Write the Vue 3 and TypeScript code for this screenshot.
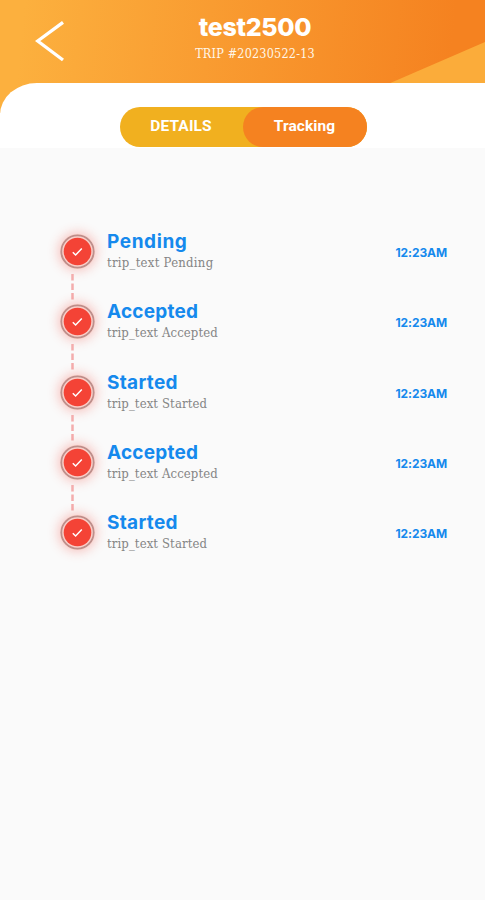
<script setup lang="ts">
interface TripEvent {
  title: string
  detail: string
  time: string
  kind: string
}

const events: TripEvent[] = ['Pending', 'Accepted', 'Started', 'Accepted', 'Started'].map((status) => ({
  title: status,
  detail: `trip_text ${status}`,
  time: '12:23AM',
  kind: status.toLowerCase(),
}))
</script>

<template>
  <main class="screen">
    <header class="hero">
      <svg class="accent" viewBox="0 0 97 42" aria-hidden="true">
        <path d="M0 42 97 0V42Z" />
      </svg>
      <button class="back" aria-label="Back">
        <svg viewBox="0 0 30 42" aria-hidden="true"><path d="M28 2.4 2.7 21 28 40" /></svg>
      </button>
      <div class="heading">
        <h1>test2500</h1>
        <p>TRIP #20230522-13</p>
      </div>
    </header>

    <section class="sheet">
      <nav class="tabs">
        <button class="tab details"><span>DETAILS</span></button>
        <button class="tab tracking"><span>Tracking</span></button>
      </nav>
    </section>

    <ol class="timeline">
      <li v-for="(event, index) in events" :key="index" class="event">
        <div class="marker">
          <svg class="dot" viewBox="0 0 35 35" aria-hidden="true">
            <circle class="ring" cx="17.5" cy="17.5" r="16.2" />
            <circle class="disc" cx="17.5" cy="17.5" r="13.8" />
            <path class="check" d="M12.8 18.2 15.6 21 21.8 14.6" />
          </svg>
          <svg v-if="index < events.length - 1" class="link" viewBox="0 0 3 26" aria-hidden="true">
            <path d="M1.5 0V26" />
          </svg>
        </div>
        <div class="copy">
          <h2 :class="event.kind">{{ event.title }}</h2>
          <p :class="event.kind">{{ event.detail }}</p>
        </div>
        <time>{{ event.time }}</time>
      </li>
    </ol>
  </main>
</template>

<style>
body {
  background: #fafafa;
}
</style>

<style scoped>
* {
  box-sizing: border-box;
}
h1, h2, p, ol {
  margin: 0;
  padding: 0;
}
button {
  border: 0;
  padding: 0;
  background: none;
}
svg {
  display: block;
  fill: none;
}
.screen {
  width: 100%;
  height: 900px;
  overflow: hidden;
  background: #fafafa;
  font-family: Inter, "Open Sans", sans-serif;
}
.hero {
  position: relative;
  height: 113px;
  background: linear-gradient(96deg, #fcb03e 5%, #f58220 92%);
}
.accent {
  position: absolute;
  right: 0;
  top: 42px;
  width: 97px;
  height: 42px;
}
.accent path {
  fill: #fbac3a;
}
.back {
  position: absolute;
  left: 35px;
  top: 20px;
  width: 30px;
  height: 42px;
}
.back path {
  stroke: #fff;
  stroke-width: 3.3;
}
.heading {
  padding: 12px 0 0 25px;
  text-align: center;
  color: #fff;
  white-space: nowrap;
}
h1 {
  font-size: 25px;
  line-height: 30px;
  font-weight: 800;
  letter-spacing: -0.3px;
}
.heading p {
  font-family: "DejaVu Serif Condensed", "DejaVu Serif", serif;
  font-stretch: condensed;
  font-size: 12.5px;
  line-height: 16px;
  margin-top: 4px;
  letter-spacing: 0.2px;
  color: #fff6e8;
}
.sheet {
  position: relative;
  height: 65px;
  margin-top: -30px;
  padding-top: 24px;
  border-radius: 37px 0 0 0 / 32px 0 0 0;
  background: #fff;
}
.tabs {
  display: flex;
  width: 247px;
  height: 40px;
  margin-left: 120px;
  border-radius: 20px;
  background: #f1b01f;
}
.tab {
  height: 40px;
  width: 123px;
  padding-bottom: 2px;
  font: 700 15.5px/38px Roboto, sans-serif;
  letter-spacing: 0.1px;
  color: #fff;
  white-space: nowrap;
}
.details {
  padding-right: 1px;
}
.tracking {
  width: 124px;
  padding-right: 1px;
  border-radius: 20px;
  background: #f58220;
}
.timeline {
  list-style: none;
  padding: 81px 38px 0 59px;
}
.event {
  display: flex;
  height: 70.3px;
}
.marker {
  width: 48px;
}
.dot {
  width: 35px;
  height: 35px;
  margin: 5px 0 0 0.5px;
  border-radius: 50%;
  background: #f9cfc9;
  box-shadow: 0 0 11px 2px #f4433648;
}
.ring {
  stroke: #bd8f8b;
  stroke-width: 1.8;
}
.disc {
  fill: #f44336;
}
.check {
  stroke: #fff;
  stroke-width: 1.5;
}
.link {
  width: 3px;
  height: 26px;
  margin: 5px 0 0 12px;
}
.link path {
  stroke: #f4adad;
  stroke-width: 2.5;
  stroke-dasharray: 6.5 3;
}
.copy {
  flex: 1;
  padding-top: 1px;
  white-space: nowrap;
}
h2 {
  font-size: 19px;
  line-height: 24px;
  font-weight: 700;
  color: #1589ed;
}
h2.pending {
  letter-spacing: 0.6px;
}
h2.accepted {
  letter-spacing: 0.2px;
}
h2.started {
  letter-spacing: 0.3px;
}
.copy p {
  font-family: "DejaVu Serif Condensed", "DejaVu Serif", serif;
  font-stretch: condensed;
  font-size: 13px;
  line-height: 18px;
  letter-spacing: 0.1px;
  color: #858585;
}
.copy p.pending {
  letter-spacing: 0.26px;
}
time {
  margin-top: 16px;
  font-size: 12px;
  line-height: 16px;
  font-weight: 700;
  letter-spacing: -0.1px;
  color: #1589ed;
}
</style>
